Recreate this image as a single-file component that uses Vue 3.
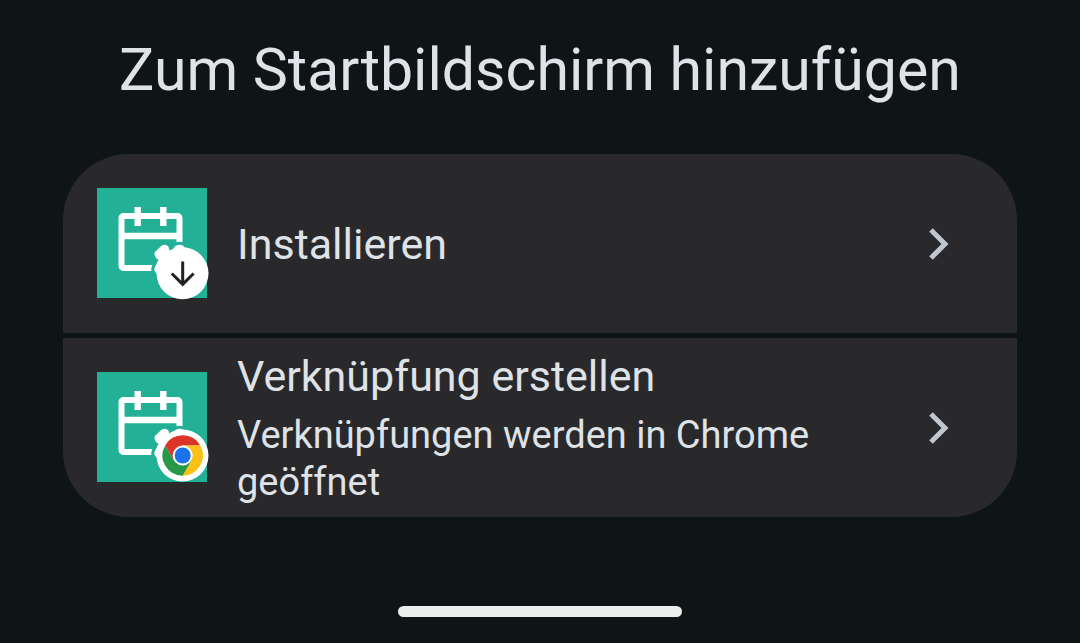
<script setup>
const options = [
  { id: 'install', title: 'Installieren', note: '', badge: 'download' },
  {
    id: 'shortcut',
    title: 'Verknüpfung erstellen',
    note: 'Verknüpfungen werden in Chrome geöffnet',
    badge: 'chrome',
  },
]
</script>

<template>
  <main class="sheet">
    <h1 class="heading">Zum Startbildschirm hinzufügen</h1>

    <div class="options">
      <button v-for="option in options" :key="option.id" type="button" class="option">
        <svg class="app-icon" viewBox="0 0 112 112" aria-hidden="true">
          <rect width="110" height="110" fill="#22b097" />
          <!-- calendar -->
          <rect x="24.5" y="28" width="58" height="52" rx="2" fill="none" stroke="#fff" stroke-width="6" />
          <path d="M25 48H82" stroke="#fff" stroke-width="6.5" />
          <path d="M40.7 19V38M66.3 19V38" stroke="#fff" stroke-width="6.4" />
          <!-- stopwatch -->
          <path
            v-for="layer in ['gap', 'body']"
            :key="layer"
            :class="layer"
            d="M64.500 57.800Q67 56.200 69.800 57.200Q72 58 72 60.500L72.500 62.500L76 61L78 58.200Q80 56.500 83 56.700Q86 57 88 59.500L92 62L90 96L68 94L60 85.500Q57.500 84.500 57.200 81.500Q57.500 79 59.500 76L61.500 71.500L59.500 70.500Q57.200 68 57.500 65Q58 63.500 60 62Z"
          />
          <template v-if="option.badge === 'download'">
            <circle cx="85.5" cy="85.3" r="26" fill="#fff" />
            <path d="M85.7 73.5V96M74.8 85.5L85.7 96.4L96.6 85.5" fill="none" stroke="#202124" stroke-width="3" />
          </template>
          <template v-else>
            <circle cx="85.5" cy="83.5" r="26" fill="#fff" />
            <g transform="translate(85.7 83.5)">
              <path d="M-17.500 -10.100A20.200 20.200 0 0 1 17.500 -10.100H0L-8.700 5Z" fill="#dd3429" />
              <path d="M17.500 -10.100A20.200 20.200 0 0 1 0 20.200L8.700 5L0 -10.100Z" fill="#fbc116" />
              <path d="M0 20.200A20.200 20.200 0 0 1 -17.500 -10.100L-8.700 5H8.700Z" fill="#279847" />
              <circle r="10" fill="#fff" />
              <circle r="8" fill="#1a73e8" />
            </g>
          </template>
        </svg>

        <span class="copy">
          <span class="title">{{ option.title }}</span>
          <span v-if="option.note" class="note">{{ option.note }}</span>
        </span>

        <svg class="chevron" viewBox="0 0 20 32" aria-hidden="true">
          <path d="M2 2L16 16L2 30" fill="none" stroke="#c1c7ce" stroke-width="5" />
        </svg>
      </button>
    </div>

    <div class="handle"></div>
  </main>
</template>

<style>
body {
  margin: 0;
  background: #0f1416;
}
</style>

<style scoped>
.sheet {
  box-sizing: border-box;
  min-height: 100vh;
  display: flex;
  flex-direction: column;
  padding: 34px 63px 26px;
  background: #0f1416;
  color: #dfe2e7;
  font-family: Roboto, "Noto Sans", sans-serif;
}

.heading {
  margin: 0 0 48px;
  font-size: 59px;
  line-height: 72px;
  font-weight: 400;
  text-align: center;
}

.options {
  display: flex;
  flex-direction: column;
  gap: 5px;
  border-radius: 66px;
  overflow: hidden;
}

.option {
  box-sizing: border-box;
  width: 100%;
  min-height: 179px;
  display: flex;
  align-items: center;
  gap: 28px;
  padding: 8px 68px 8px 34px;
  border: 0;
  background: #29292b;
  color: inherit;
  font-family: inherit;
  text-align: left;
  cursor: pointer;
}

.app-icon {
  flex: none;
  width: 112px;
  height: 112px;
}

.gap {
  fill: #22b097;
  stroke: #22b097;
  stroke-width: 6px;
  stroke-linejoin: round;
}

.body {
  fill: #fff;
}

.copy {
  flex: 1;
  display: flex;
  flex-direction: column;
  gap: 10px;
  padding-right: 80px;
}

.title {
  font-size: 43px;
  line-height: 52px;
}

.note {
  font-size: 38px;
  line-height: 47px;
}

.chevron {
  flex: none;
  width: 20px;
  height: 32px;
}

.handle {
  width: 284px;
  height: 11px;
  margin: auto auto 0;
  border-radius: 6px;
  background: #ebeeec;
}
</style>
